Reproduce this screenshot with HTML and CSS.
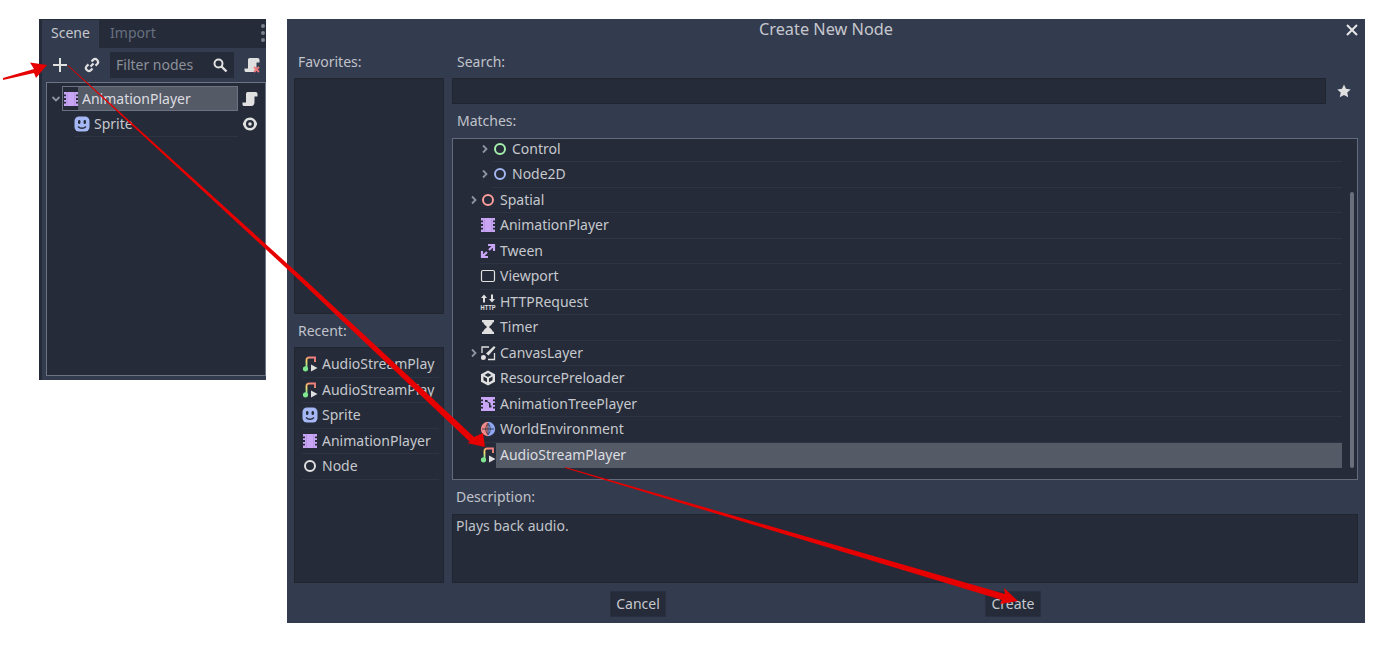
FILE: index.html
```html
<!DOCTYPE html>
<html lang="en">
<head>
<meta charset="utf-8">
<title>Create New Node</title>
<link rel="stylesheet" href="styles.css">
</head>
<body>
<svg class="sprite" width="0" height="0">
  <defs>
    <linearGradient id="noteGrad" x1="0" y1="1" x2="0.5" y2="0">
      <stop offset="0.05" stop-color="#7fe58f"/>
      <stop offset="0.5" stop-color="#f5e070"/>
      <stop offset="0.85" stop-color="#f5a06a"/>
      <stop offset="1" stop-color="#f58080"/>
    </linearGradient>
    <symbol id="i-film" viewBox="0 0 16 16">
      <path fill="#c8a6f5" fill-rule="evenodd" d="M1 1h14v14H1zM1 3.500v1.800h2V3.500zM13 3.500v1.800h2V3.500zM1 7.100v1.800h2V7.100zM13 7.100v1.800h2V7.100zM1 10.700v1.800h2v-1.800zM13 10.700v1.800h2v-1.800z"/>
      <path stroke="#a788d0" stroke-width="0.600" d="M4.300 1v14M11.700 1v14"/>
    </symbol>
    <symbol id="i-sprite" viewBox="0 0 16 16">
      <rect x="0.500" y="0.500" width="15" height="15" rx="4.500" fill="#a5b7f5"/>
      <rect x="4" y="4" width="2.400" height="4" rx="1.200" fill="#252b39"/>
      <rect x="9.600" y="4" width="2.400" height="4" rx="1.200" fill="#252b39"/>
      <path d="M4 10.500c2.200 2.300 5.800 2.300 8 0" fill="none" stroke="#252b39" stroke-width="1.300"/>
    </symbol>
    <symbol id="i-audio" viewBox="0 0 16 16">
      <path fill="none" stroke="url(#noteGrad)" stroke-width="1.800" d="M4.500 12V4a2.500 2.500 0 0 1 2.500-2.500h6V6"/>
      <circle cx="3.500" cy="12.800" r="2.600" fill="#7fe58f"/>
      <path class="play" d="M9 8.500v7l6.500-3.500z"/>
    </symbol>
    <symbol id="i-tween" viewBox="0 0 16 16">
      <path fill="none" stroke="#c8a6f5" stroke-width="2.200" d="M8 2h6v6M14 2L9 7M8 14H2V8M2 14l5-5"/>
    </symbol>
    <symbol id="i-viewport" viewBox="0 0 16 16">
      <rect x="1.500" y="2.500" width="13" height="11" rx="1.500" fill="none" stroke="#e0e0e0" stroke-width="1.200"/>
    </symbol>
    <symbol id="i-timer" viewBox="0 0 16 16">
      <path fill="#e0e0e0" d="M2 1h12v2.200h-1.200c-.3 2.500-2.800 3.500-3.800 4.800 1 1.300 3.500 2.300 3.800 4.800H14V15H2v-2.200h1.200C3.500 10.300 6 9.300 7 8 6 6.700 3.500 5.700 3.200 3.200H2z"/>
    </symbol>
    <symbol id="i-canvas" viewBox="0 0 16 16">
      <path fill="none" stroke="#e0e0e0" stroke-width="1.300" d="M9 2H2v6M14.500 8v6.500H8"/>
      <path fill="#e0e0e0" d="M14 1l1.500 1.500-7 8L6 8.500zM3.500 10a2.500 2.500 0 1 1-.1 5 2.500 2.500 0 0 1 .1-5z"/>
    </symbol>
    <symbol id="i-cube" viewBox="0 0 16 16">
      <path fill="#e0e0e0" d="M8 0.500l7 3.700v7.600l-7 3.700-7-3.700V4.200z"/>
      <path fill="#252b39" d="M8 3l3.500 2L8 7 4.500 5zM3.500 6.500L7 8.500v3.800l-3.500-2zM12.500 6.500L9 8.500v3.800l3.500-2z"/>
    </symbol>
    <symbol id="i-tree" viewBox="0 0 16 16">
      <path fill="#c8a6f5" fill-rule="evenodd" d="M1 1h14v14H1zM1 3.500v1.800h2V3.500zM13 3.500v1.800h2V3.500zM1 7.100v1.800h2V7.100zM13 7.100v1.800h2V7.100zM1 10.700v1.800h2v-1.800zM13 10.700v1.800h2v-1.800zM5 4v2h2l2 1.500V11.500h2.500v-2h-1V7L7.500 5.500V4z"/>
    </symbol>
    <symbol id="i-globe" viewBox="0 0 16 16">
      <path fill="#f08a8a" d="M8 0.800a7.200 7.200 0 0 0 0 14.400z"/>
      <path fill="#8ea6f0" d="M8 0.800a7.200 7.200 0 0 1 0 14.400z"/>
      <path fill="none" stroke="#252b39" stroke-width="0.800" d="M8 2.500c-3 3-3 8 0 11M8 2.500c3 3 3 8 0 11M2 8h12M8 2v12"/>
    </symbol>
    <symbol id="i-script" viewBox="0 0 16 16">
      <path fill="#e0e0e0" d="M5.500 1h8c1.300 0 2 .9 2 2.200v2.300h-3V11c0 2.300-1 4-3 4H2.200c-1 0-1.700-.7-1.700-1.800v-1.700h3.500V3c0-1 .6-2 1.500-2z"/>
    </symbol>
    <symbol id="i-chev" viewBox="0 0 10 10">
      <path fill="none" stroke="#8f949f" stroke-width="1.800" d="M3 1.500L6.500 5 3 8.500"/>
    </symbol>
  </defs>
</svg>

<section class="scene-panel">
  <div class="tabbar">
    <span class="tab tab-active">Scene</span>
    <span class="tab tab-dim">Import</span>
    <span class="kebab"><i></i><i></i><i></i></span>
  </div>
  <div class="scene-tools">
    <svg class="tool-plus" viewBox="0 0 16 16" width="16" height="16"><path d="M8 1v14M1 8h14" stroke="#e0e0e0" stroke-width="2" fill="none"/></svg>
    <svg class="tool-link" viewBox="0 0 16 16" width="16" height="16"><path d="M6.500 9.500l3-3M7.500 4.500l1.600-1.600a2.900 2.900 0 0 1 4.100 4.100l-1.700 1.600M8.500 11.500l-1.600 1.600a2.900 2.900 0 0 1-4.100-4.100l1.700-1.600" stroke="#e0e0e0" stroke-width="2.200" fill="none"/></svg>
    <div class="filter">
      <span class="filter-text">Filter nodes</span>
      <svg viewBox="0 0 16 16" width="16" height="16"><circle cx="6.500" cy="6.500" r="4" fill="none" stroke="#e0e0e0" stroke-width="2"/><path d="M9.500 9.500l5 5" stroke="#e0e0e0" stroke-width="2.400"/></svg>
    </div>
    <svg class="tool-script" viewBox="0 0 16 16" width="16" height="16"><use href="#i-script"/><path d="M10 10l5 5M15 10l-5 5" stroke="#f07a7a" stroke-width="1.800"/></svg>
  </div>
  <div class="scene-tree">
    <div class="scene-row scene-row-root">
      <svg class="mini-chev" viewBox="0 0 10 10" width="10" height="10"><path fill="none" stroke="#8f949f" stroke-width="1.800" d="M1.500 3L5 6.500 8.500 3"/></svg>
      <div class="scene-selected">
        <span class="scene-icon-cell"><svg width="16" height="16"><use href="#i-film"/></svg></span>
        <span class="scene-name">AnimationPlayer</span>
      </div>
      <svg class="row-end" width="16" height="16"><use href="#i-script"/></svg>
    </div>
    <div class="scene-row scene-row-child">
      <div class="scene-child">
        <svg width="16" height="16"><use href="#i-sprite"/></svg>
        <span>Sprite</span>
      </div>
      <svg class="row-end" viewBox="0 0 16 16" width="16" height="16"><path fill="#e0e0e0" fill-rule="evenodd" d="M8 1.500c3.800 0 6 2.800 7.200 6.500-1.200 3.700-3.400 6.500-7.200 6.500S2 11.700.8 8C2 4.300 4.200 1.500 8 1.500zM8 4a4 4 0 1 0 0 8 4 4 0 0 0 0-8zM8 6.200a1.800 1.800 0 1 1 0 3.600 1.800 1.800 0 0 1 0-3.600z"/></svg>
    </div>
  </div>
</section>

<section class="dialog">
  <header class="dialog-title">
    <span>Create New Node</span>
    <svg class="dialog-close" viewBox="0 0 12 12" width="12" height="12"><path d="M1 1l10 10M11 1L1 11" stroke="#e8e8e8" stroke-width="2"/></svg>
  </header>
  <div class="dialog-main">
    <aside class="side">
      <label class="lbl lbl-first">Favorites:</label>
      <div class="box box-fav"></div>
      <label class="lbl lbl-recent">Recent:</label>
      <div class="box box-recent">
        <div class="item"><svg class="audio-white" width="16" height="16"><use href="#i-audio"/></svg><span>AudioStreamPlay</span></div>
        <div class="item"><svg class="audio-blue" width="16" height="16"><use href="#i-audio"/></svg><span>AudioStreamPlay</span></div>
        <div class="item"><svg width="16" height="16"><use href="#i-sprite"/></svg><span>Sprite</span></div>
        <div class="item"><svg width="16" height="16"><use href="#i-film"/></svg><span>AnimationPlayer</span></div>
        <div class="item"><svg viewBox="0 0 16 16" width="16" height="16"><circle cx="8" cy="8" r="5" fill="none" stroke="#e0e0e0" stroke-width="2"/></svg><span>Node</span></div>
      </div>
    </aside>
    <div class="content">
      <label class="lbl lbl-first lbl-wide">Search:</label>
      <div class="search-row">
        <div class="search-input"></div>
        <svg class="star" viewBox="0 0 16 16" width="16" height="16"><path fill="#e0e0e0" d="M8 1.500l2 4.300 4.700.6-3.400 3.200.9 4.700L8 12l-4.200 2.300.9-4.700L1.300 6.400 6 5.800z"/></svg>
      </div>
      <label class="lbl lbl-matches lbl-wide">Matches:</label>
      <div class="matches">
        <div class="row depth2"><svg class="chev" width="10" height="10"><use href="#i-chev"/></svg><svg width="16" height="16" viewBox="0 0 16 16"><circle cx="8" cy="8" r="5" fill="none" stroke="#a5efac" stroke-width="2"/></svg><span>Control</span></div>
        <div class="row depth2"><svg class="chev" width="10" height="10"><use href="#i-chev"/></svg><svg width="16" height="16" viewBox="0 0 16 16"><circle cx="8" cy="8" r="5" fill="none" stroke="#a5b7f3" stroke-width="2"/></svg><span>Node2D</span></div>
        <div class="row depth1"><svg class="chev" width="10" height="10"><use href="#i-chev"/></svg><svg width="16" height="16" viewBox="0 0 16 16"><circle cx="8" cy="8" r="5" fill="none" stroke="#fc9c9c" stroke-width="2"/></svg><span>Spatial</span></div>
        <div class="row depth0"><svg width="16" height="16"><use href="#i-film"/></svg><span>AnimationPlayer</span></div>
        <div class="row depth0"><svg width="16" height="16"><use href="#i-tween"/></svg><span>Tween</span></div>
        <div class="row depth0"><svg width="16" height="16"><use href="#i-viewport"/></svg><span>Viewport</span></div>
        <div class="row depth0"><svg viewBox="0 0 16 16" width="16" height="16"><path fill="#e0e0e0" d="M4 0.500l3 3.500H5v4.500H3V4H1zM12 8.500L9 5h2V0.500h2V5h2z"/><text x="0.500" y="15.500" class="http-text" textLength="15" lengthAdjust="spacingAndGlyphs">HTTP</text></svg><span>HTTPRequest</span></div>
        <div class="row depth0"><svg width="16" height="16"><use href="#i-timer"/></svg><span>Timer</span></div>
        <div class="row depth1"><svg class="chev" width="10" height="10"><use href="#i-chev"/></svg><svg width="16" height="16"><use href="#i-canvas"/></svg><span>CanvasLayer</span></div>
        <div class="row depth0"><svg width="16" height="16"><use href="#i-cube"/></svg><span>ResourcePreloader</span></div>
        <div class="row depth0"><svg width="16" height="16"><use href="#i-tree"/></svg><span>AnimationTreePlayer</span></div>
        <div class="row depth0"><svg width="16" height="16"><use href="#i-globe"/></svg><span>WorldEnvironment</span></div>
        <div class="row depth0 row-sel"><svg class="audio-white" width="16" height="16"><use href="#i-audio"/></svg><span class="sel-text">AudioStreamPlayer</span></div>
        <div class="scrollbar"></div>
      </div>
      <label class="lbl lbl-desc">Description:</label>
      <div class="desc">Plays back audio.</div>
    </div>
  </div>
  <footer class="dialog-foot">
    <button class="btn" type="button">Cancel</button>
    <button class="btn" type="button">Create</button>
  </footer>
</section>

<svg class="arrows" viewBox="0 0 1385 654" width="1385" height="654">
  <polygon fill="#e60000" points="3,78 34,69 30,62.500 47,65 36,78 34,73 3,80"/>
  <polygon fill="#e60000" points="68,65 301.500,276.500 474,437 483,433 485,447 467,443 470,442 298.500,279.500 68,66"/>
  <polygon fill="#e60000" points="565,467 1005,594 1004,588 1018,601 1000,604 1002,600 565,468"/>
</svg>
</body>
</html>
```

FILE: styles.css
```css
html, body {
  margin: 0;
  padding: 0;
  background: #fff;
}
body {
  position: relative;
  width: 1385px;
  height: 654px;
  overflow: hidden;
  font-family: "Noto Sans", "Open Sans", sans-serif;
  font-size: 14px;
  line-height: 20px;
  color: #c6c8cd;
}
svg { display: block; flex: none; }
.sprite { position: absolute; }
.play { fill: #e0e0e0; }
.audio-blue .play { fill: #8ea6f0; }
.http-text {
  font-family: "Liberation Sans", sans-serif;
  font-size: 6.500px;
  font-weight: 700;
  fill: #e0e0e0;
}

/* Scene dock */
.scene-panel {
  position: absolute;
  left: 39px;
  top: 19px;
  width: 227px;
  height: 361px;
  box-sizing: border-box;
  border-left: 3px solid #252b39;
  background: #333b4f;
  display: flex;
  flex-direction: column;
  overflow: hidden;
}
.tabbar {
  height: 29px;
  flex: none;
  background: #252b39;
  display: flex;
  align-items: stretch;
  padding-top: 1px;
  box-sizing: border-box;
}
.tab {
  display: flex;
  align-items: center;
  justify-content: center;
  box-sizing: border-box;
  height: 28px;
  padding-bottom: 2px;
}
.tab-active {
  width: 57px;
  background: #333b4f;
}
.tab-dim {
  width: 68px;
  color: #687080;
}
.kebab {
  margin-left: auto;
  margin-right: 1px;
  display: flex;
  flex-direction: column;
  justify-content: center;
  gap: 3px;
  padding-bottom: 2px;
}
.kebab i {
  display: block;
  width: 4px;
  height: 4px;
  border-radius: 50%;
  background: #7d818b;
}
.scene-tools {
  height: 34px;
  flex: none;
  display: flex;
  align-items: center;
  padding-left: 10px;
  box-sizing: border-box;
}
.tool-link { margin-left: 16px; }
.filter {
  margin-left: 10px;
  width: 124px;
  height: 26px;
  box-sizing: border-box;
  background: #252b39;
  display: flex;
  align-items: center;
  justify-content: space-between;
  padding: 0 6px;
}
.filter-text { color: #8d919a; }
.tool-script { margin-left: 10px; }
.scene-tree {
  margin-left: 4px;
  height: 294px;
  flex: none;
  box-sizing: border-box;
  background: #252b39;
  border: 1px solid #6c7486;
  padding-top: 3px;
}
.scene-row {
  height: 25.500px;
  display: flex;
  align-items: center;
  position: relative;
}
.mini-chev { margin-left: 4px; }
.scene-selected {
  margin-left: 1px;
  width: 176px;
  height: 25px;
  box-sizing: border-box;
  border: 1px solid #6d7282;
  background: #555a67;
  display: flex;
  align-items: center;
  color: #dcdde0;
}
.scene-icon-cell {
  width: 15px;
  height: 23px;
  background: #252b39;
  display: flex;
  align-items: center;
  justify-content: center;
}
.scene-name { margin-left: 4px; }
.row-end { margin-left: 4px; }
.scene-child {
  margin-left: 27px;
  width: 164px;
  height: 25.500px;
  box-sizing: border-box;
  display: flex;
  align-items: center;
  gap: 4px;
  border-bottom: 1px solid #2d3444;
}

/* Dialog */
.dialog {
  position: absolute;
  left: 287px;
  top: 19px;
  width: 1078px;
  height: 604px;
  background: #333b4f;
  display: flex;
  flex-direction: column;
}
.dialog-title {
  height: 21px;
  flex: none;
  display: flex;
  align-items: center;
  justify-content: center;
  position: relative;
  font-size: 16.300px;
  padding-bottom: 1px;
  box-sizing: border-box;
  color: #c6c8cd;
}
.dialog-close {
  position: absolute;
  right: 7px;
  top: 5px;
}
.dialog-main {
  display: flex;
  gap: 8px;
  padding: 0 7px;
  height: 543px;
  flex: none;
}
.side {
  width: 150px;
  flex: none;
  display: flex;
  flex-direction: column;
}
.content {
  flex: 1;
  display: flex;
  flex-direction: column;
  min-width: 0;
}
.lbl {
  display: flex;
  align-items: center;
  flex: none;
  box-sizing: border-box;
  padding-left: 4px;
  color: #c0c3c9;
}
.lbl-wide { padding-left: 5px; }
.lbl-first { height: 38px; padding-top: 6px; }
.lbl-recent { height: 33px; }
.lbl-matches { height: 34px; }
.lbl-desc { height: 34px; }
.box {
  background: #252b39;
  box-sizing: border-box;
  border: 1px solid #20252f;
}
.box-fav { height: 236px; flex: none; }
.box-recent {
  height: 236px;
  flex: none;
  padding: 4px 4px 0 7px;
}
.item {
  height: 25.500px;
  box-sizing: border-box;
  display: flex;
  align-items: center;
  gap: 4px;
  white-space: nowrap;
  overflow: hidden;
  border-bottom: 1px solid #2d3444;
}
.search-row {
  display: flex;
  align-items: center;
  height: 26px;
  flex: none;
}
.search-input {
  width: 874px;
  height: 26px;
  background: #252b39;
  border: 1px solid #20252f;
  box-sizing: border-box;
}
.star { margin-left: 10px; }
.matches {
  height: 342px;
  flex: none;
  box-sizing: border-box;
  background: #252b39;
  border: 1px solid #626a7c;
  position: relative;
  overflow: hidden;
}
.row {
  margin-right: 15px;
  height: 25.500px;
  box-sizing: border-box;
  display: flex;
  align-items: center;
  gap: 4px;
  border-bottom: 1px solid #2d3444;
  position: relative;
  white-space: nowrap;
}
.row:first-child { margin-top: -2.500px; }
.depth0 { margin-left: 27px; }
.depth1 { margin-left: 27px; }
.depth2 { margin-left: 39px; }
.chev {
  position: absolute;
  left: -12px;
  top: 7px;
}
.depth1 .chev { left: -11px; }
.row-sel { border-bottom: 0; }
.sel-text {
  background: #555a67;
  color: #dcdde0;
  flex: 1;
  height: 25px;
  display: flex;
  align-items: center;
  padding-left: 4px;
  margin-left: -4px;
}
.scrollbar {
  position: absolute;
  right: 3px;
  top: 53px;
  bottom: 11px;
  width: 4px;
  border-radius: 2px;
  background: #6a6f7b;
}
.desc {
  height: 69px;
  flex: none;
  box-sizing: border-box;
  background: #252b39;
  border: 1px solid #20252f;
  padding: 1px 3px;
  color: #c0c3c9;
}
.dialog-foot {
  flex: 1;
  display: flex;
  justify-content: center;
  align-items: flex-start;
  gap: 319px;
  padding: 8px 1px 0 0;
}
.btn {
  width: 56px;
  height: 26px;
  background: #252b39;
  border: 1px solid #2a3040;
  color: #c6c8cd;
  font: inherit;
  padding: 0;
}

.arrows {
  position: absolute;
  left: 0;
  top: 0;
  pointer-events: none;
}
```
